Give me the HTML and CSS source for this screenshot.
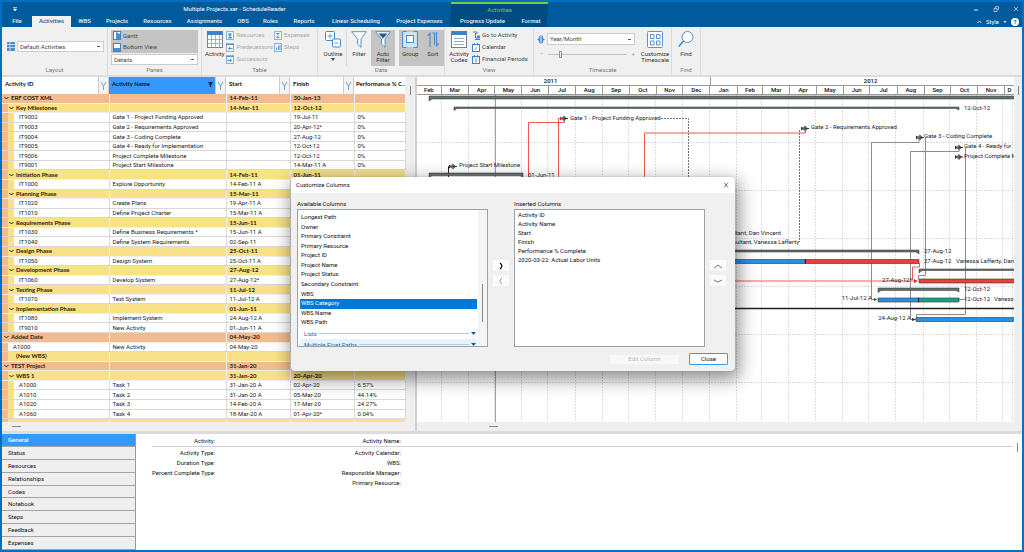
FILE: index.html
```html
<!DOCTYPE html>
<html lang="en">
<head>
<meta charset="utf-8">
<title>Multiple Projects.xer - ScheduleReader</title>
<link rel="stylesheet" href="styles.css">
</head>
<body>
<div class="window">
  <header class="titlebar">
    <div class="title-row">
      <button class="quick" aria-label="Customize toolbar"><svg width="6" height="6"><path d="M1 1.5h4M1.5 3l1.5 2L4.500 3z" stroke="#fff" stroke-width=".6" fill="#fff"/></svg></button>
      <h1 class="title">Multiple Projects.xer - ScheduleReader</h1>
      <div class="context">Activities</div>
      <div class="win-buttons">
        <button aria-label="Minimize"><svg width="6" height="6"><path d="M1 4h4" stroke="#dfe9f2"/></svg></button>
        <button aria-label="Restore"><svg width="6" height="6"><path d="M1 2.500h3v3H1zM2.500 2V.7H5.500v2.800H4.500" stroke="#dfe9f2" stroke-width=".7" fill="none"/></svg></button>
        <button aria-label="Close window"><svg width="6" height="6"><path d="M1 1l4 4M5 1L1 5" stroke="#dfe9f2" stroke-width=".7"/></svg></button>
      </div>
    </div>
    <div class="tab-row">
      <nav class="tabs">
        <a href="#">File</a><a href="#" class="active">Activities</a><a href="#">WBS</a><a href="#">Projects</a><a href="#">Resources</a><a href="#">Assignments</a><a href="#">OBS</a><a href="#">Roles</a><a href="#">Reports</a><a href="#">Linear Scheduling</a><a href="#">Project Expenses</a><a href="#" class="ctx">Progress Update</a><a href="#" class="ctx">Format</a>
      </nav>
      <div class="style-menu">
        <svg width="5" height="4"><path d="M.7 3L2.500 1l1.800 2" stroke="#fff" stroke-width=".8" fill="none"/></svg>
        <button>Style</button>
        <svg width="4" height="4"><path d="M.5 1h3L2 3z" fill="#fff"/></svg>
        <button class="help" aria-label="Help">?</button>
      </div>
    </div>
  </header>

  <section class="ribbon">
    <div class="group g-layout">
      <div class="tools">
        <svg class="i8" viewBox="0 0 8 9"><rect width="8" height="9" fill="#4a90d0"/><path d="M0 2.500h8M0 5.500h8M3 0v9" stroke="#cfe2f5" stroke-width=".8"/></svg>
        <select aria-label="Layout"><option>Default Activities</option></select>
      </div>
      <h2>Layout</h2>
    </div>
    <div class="group g-panes">
      <div class="tools">
        <div class="pressed">
          <button class="row"><svg class="i8" viewBox="0 0 8 9"><rect x=".5" y=".5" width="7" height="8" fill="#fff" stroke="#3c84c6"/><path d="M3 1v7h4V3z" fill="#4a90d0"/></svg>Gantt</button>
          <button class="row"><svg class="i8" viewBox="0 0 8 9"><rect x=".5" y=".5" width="7" height="8" fill="#fff" stroke="#3c84c6"/><path d="M1 5h6v3H1z" fill="#4a90d0"/></svg>Bottom View</button>
        </div>
        <select aria-label="Bottom pane"><option>Details</option></select>
      </div>
      <h2>Panes</h2>
    </div>
    <div class="group g-table">
      <div class="tools">
        <button class="big"><svg class="i16" viewBox="0 0 16 17"><rect x=".5" y=".5" width="15" height="16" fill="#fff" stroke="#77818a"/><path d="M0 0h16v4H0z" fill="#3c84c6"/><path d="M4.500 4v13M8.500 4v13M12.500 4v13M0 8.500h16M0 12.500h16" stroke="#8a939b" stroke-width=".7"/></svg>Activity</button>
        <div class="stack dim">
          <button class="row"><svg class="i8" viewBox="0 0 8 9"><rect x=".5" y=".5" width="7" height="8" fill="#eef5fb" stroke="#8ab4dc"/><circle cx="4" cy="3.500" r="1.500" fill="#5b97cf"/><path d="M2 7.500c0-3 4-3 4 0z" fill="#5b97cf"/></svg>Resources</button>
          <button class="row"><svg class="i8" viewBox="0 0 8 9"><rect x=".5" y=".5" width="7" height="8" fill="#eef5fb" stroke="#8ab4dc"/><path d="M0 1.500h8M6.500 5.500h-4M4 4L2.500 5.500 4 7" stroke="#5b97cf" fill="none"/></svg>Predecessors</button>
          <button class="row"><svg class="i8" viewBox="0 0 8 9"><rect x=".5" y=".5" width="7" height="8" fill="#eef5fb" stroke="#8ab4dc"/><path d="M0 1.500h8M1.500 5.500h4M4 4l1.500 1.500L4 7" stroke="#5b97cf" fill="none"/></svg>Successors</button>
        </div>
        <div class="stack dim">
          <button class="row"><svg class="i8" viewBox="0 0 8 9"><rect x=".5" y=".5" width="7" height="8" fill="#eef5fb" stroke="#8ab4dc"/><path d="M5.500 2.500h-3l2 2-2 2h3" stroke="#5b97cf" fill="none"/></svg>Expenses</button>
          <button class="row"><svg class="i8" viewBox="0 0 8 9"><rect x=".5" y=".5" width="7" height="8" fill="#eef5fb" stroke="#8ab4dc"/><path d="M2.500 7V4.500M4.500 7V3M6 7V2" stroke="#5b97cf"/></svg>Steps</button>
        </div>
      </div>
      <h2>Table</h2>
    </div>
    <div class="group g-data">
      <div class="tools">
        <button class="big outline"><svg class="i16" viewBox="0 0 16 17"><rect x=".5" y=".5" width="9" height="9" rx="1" fill="#fff" stroke="#4a88c4"/><path d="M5 2.500v5M2.500 5h5" stroke="#4a88c4" stroke-width=".8"/><rect x="7.500" y="8" width="8" height="8" rx="1" fill="#fff" stroke="#4a88c4"/><path d="M9.500 12h4" stroke="#4a88c4" stroke-width=".8"/></svg>Outline<svg class="caret" viewBox="0 0 4 3"><path d="M0 0h4L2 3z" fill="#444"/></svg></button>
        <button class="big"><svg class="i16" viewBox="0 0 16 17"><path d="M.7 .7h14.600L10 8v8.300L6.500 13V8z" fill="#fff" stroke="#4a88c4" stroke-width=".9"/></svg>Filter</button>
        <button class="big on"><svg class="i16" viewBox="0 0 16 17"><path d="M.7 .7h14.600L10 8v8.300L6.500 13V8z" fill="#fff" stroke="#4a88c4" stroke-width=".9"/><path d="M3.500 2.500h9L8.200 7.500z" fill="#1c5c9c"/></svg>Auto<br>Filter</button>
        <div class="pair">
          <button class="big"><svg class="i16" viewBox="0 0 16 17"><path d="M1 1h14v15H1z" fill="#d5e4f3"/><path d="M4.500 .6H.6v15.800h3.900M11.500 .6h3.900v15.800h-3.900" fill="none" stroke="#4a88c4"/><rect x="4.500" y="4.500" width="7" height="7" fill="#fff" stroke="#4a88c4"/></svg>Group</button>
          <button class="big"><svg class="i16" viewBox="0 0 16 17"><path d="M5 16V2.500M2.500 5L5 2.200V12M7.500 2h2v12M11.500 1v13.500M14 12l-2.500 3V2" fill="none" stroke="#4a88c4" stroke-width="1.100"/></svg>Sort</button>
        </div>
      </div>
      <h2>Data</h2>
    </div>
    <div class="group g-view">
      <div class="tools">
        <button class="big"><svg class="i16" viewBox="0 0 16 17"><rect x=".5" y=".5" width="15" height="16" fill="#fff" stroke="#77818a"/><path d="M0 0h16v4H0z" fill="#3c84c6"/><path d="M3 7.500h10M3 10.500h10M3 13.500h10" stroke="#8a939b" stroke-width=".8"/></svg>Activity<br>Codes</button>
        <div class="stack">
          <button class="row"><svg class="i8" viewBox="0 0 8 9"><path d="M1 1h4v2M3.500 2v5h3M3 8.500h5" stroke="#3c84c6" fill="none"/><path d="M5 4.500h3v3H5z" fill="#4a90d0"/></svg>Go to Activity</button>
          <button class="row"><svg class="i8" viewBox="0 0 8 9"><rect x=".5" y="1.500" width="7" height="7" fill="#fff" stroke="#3c84c6"/><path d="M2.500 0v2.500M5.500 0v2.500M5 4L3 7" stroke="#3c84c6" stroke-width=".8"/></svg>Calendar</button>
          <button class="row"><svg class="i8" viewBox="0 0 8 9"><rect x=".5" y="1.500" width="7" height="7" fill="#fff" stroke="#3c84c6"/><path d="M2.500 0v2.500M5.500 0v2.500M4 3.500v4" stroke="#3c84c6"/></svg>Financial Periods</button>
        </div>
      </div>
      <h2>View</h2>
    </div>
    <div class="group g-time">
      <div class="tools">
        <div class="scale">
          <div class="scale-top">
            <svg class="i8" viewBox="0 0 8 9"><path d="M2.500 1v7M4 0v9M5.500 1v7" stroke="#4a90d0"/><path d="M0 4.500L3 2.500v4zM8 4.500L5 2.500v4z" fill="#4a90d0"/></svg>
            <select aria-label="Timescale"><option>Year/Month</option></select>
          </div>
          <div class="zoom"><button aria-label="Zoom out">−</button><input type="range" aria-label="Zoom" min="0" max="100" value="14"><button aria-label="Zoom in">+</button></div>
        </div>
        <button class="big"><svg class="i16" viewBox="0 0 16 17"><rect x=".5" y=".5" width="15" height="16" rx="1" fill="#fff" stroke="#5e94c8"/><path d="M3.500 3.500h3.500v4H3.500zM9.500 3.500H13v4H9.500zM3.500 10h3.500v4H3.500zM9.500 10H13v4H9.500z" fill="#fff" stroke="#4a88c4" stroke-width=".9"/></svg>Customize<br>Timescale</button>
      </div>
      <h2>Timescale</h2>
    </div>
    <div class="group g-find">
      <div class="tools">
        <button class="big"><svg class="i16" viewBox="0 0 16 17"><circle cx="9.500" cy="6" r="5.500" fill="#fff" stroke="#3c84c6" stroke-width=".9"/><path d="M5.500 10L.8 15.500" stroke="#3c84c6" stroke-width="1.400"/></svg>Find</button>
      </div>
      <h2>Find</h2>
    </div>
  </section>

  <main class="work">
    <div class="pane">
      <div class="grid-box">
        <table class="grid">
          <colgroup><col class="c-id"><col class="c-name"><col class="c-date"><col class="c-date"><col class="c-perf"></colgroup>
          <thead><tr><th>Activity ID</th><th class="sel"><span class="th-flex">Activity Name<svg width="5" height="5"><path d="M0 0h5L3.200 3v2H1.800V3z" fill="#12263c"/></svg></span></th><th>Start</th><th>Finish</th><th class="last">Performance % C...</th></tr></thead>
          <tbody id="rows"></tbody>
        </table>
        <div class="vbar"><i></i></div>
      </div>
      <div class="hbar"><i></i></div>
    </div>
    <div class="gantt">
      <div class="gantt-box">
        <div class="chart">
          <div class="years"><span class="y1">2011</span><span class="y2">2012</span></div>
          <div class="months" id="months"></div>
          <svg class="plot" role="img" aria-label="Gantt chart">
            <g transform="translate(-417 -94)">
              <g id="lines" stroke="#dedede" stroke-dasharray="2 1"></g>
              <path d="M495.500 94v330" stroke="#6aaef0"/>
              <g fill="none" stroke="#8b8b8b">
                <path d="M871.500 298V141.500H919V138M871.500 298.500h5"/>
                <path d="M910.500 318V150.500H959V148M910.500 318.500h5"/>
                <path d="M925.500 137V274.500h-7v4M965.500 147V313.500h-49v3M959 298.500h6"/>
                <path d="M448.500 177V165.500h4" stroke="#222"/>
                <path d="M661 117.500h27.500V177M799.500 129V241" stroke="#777" stroke-dasharray="2 1"/>
              </g>
              <g fill="none" stroke="#ee5a55">
                <path d="M528.500 177V121.500H564.500V119M558.500 177V117.500h4M644.500 177V132H805.500V129M734 280h181M919.500 262v4h-7v13"/>
              </g>
              <g fill="#65706f" stroke="#333" stroke-width=".5">
                <path d="M429 95h590v3H432l-3 2z"/>
                <path d="M454 106h505v3l-3-1.500H457l-3 2z"/>
                <path d="M429 172h94v4l-3-1.500H432l-3 2z"/>
                <path d="M734 249h185v4l-3-2H734z"/>
                <path d="M919 268h100v1.500H922l-3 2.500z"/>
                <path d="M878 287h81v4l-3-1.500H881l-3 2z"/>
              </g>
              <path d="M734 307.500h290" stroke="#222" stroke-width="1.500"/>
              <g stroke="#333" stroke-width=".6">
                <path d="M730 258.500h75v4h-75zM878 297h40.500v4H878zM916 316.500h110v4H916z" fill="#2d8fe0"/>
                <path d="M805.500 258.500H919v4H805.500zM919 278h110v4H919z" fill="#ea4136"/>
                <path d="M918.500 297H959v4h-40.500z" fill="#12a58a"/>
                <path d="M805.500 258v5M918.500 296.500v5" stroke="#000"/>
              </g>
              <g fill="#333" id="stones"></g>
              <g class="labels">
                <text x="570" y="119">Gate 1 - Project Funding Approved</text>
                <text x="811" y="128">Gate 2 - Requirements Approved</text>
                <text x="924" y="137">Gate 3 - Coding Complete</text>
                <text x="964" y="147">Gate 4 - Ready for</text>
                <text x="964" y="157">Project Complete M</text>
                <text x="964" y="109">12-Oct-12</text>
                <text x="459" y="166">Project Start Milestone</text>
                <text x="528" y="176">01-Jun-11</text>
                <text x="781" y="234" class="end">Consultant, Dan Vincent</text>
                <text x="799" y="243" class="end">Consultant, Vanessa Lafferty</text>
                <text x="924" y="252">27-Aug-12</text>
                <text x="924" y="262">27-Aug-12</text><text x="956" y="262">Vanessa Lafferty, Dan</text>
                <text x="912" y="281" class="end">27-Aug-12*</text>
                <text x="964" y="290">12-Oct-12</text>
                <text x="964" y="300">12-Oct-12</text><text x="994" y="300">Vaness</text>
                <text x="872" y="299" class="end">11-Jul-12 A</text>
                <text x="911" y="319" class="end">24-Aug-12 A</text>
              </g>
            </g>
          </svg>
        </div>
        <div class="vbar"><i></i></div>
      </div>
      <div class="hbar"><i></i></div>
    </div>
  </main>

  <section class="details">
    <nav class="side">
      <button class="active">General</button><button>Status</button><button>Resources</button><button>Relationships</button><button>Codes</button><button>Notebook</button><button>Steps</button><button>Feedback</button><button>Expenses</button>
    </nav>
    <div class="info">
      <dl class="top"><dt>Activity:</dt><dt>Activity Name:</dt></dl>
      <dl><dt>Activity Type:</dt><dt>Activity Calendar:</dt><dt>Duration Type:</dt><dt>WBS:</dt><dt>Percent Complete Type:</dt><dt>Responsible Manager:</dt><dt></dt><dt>Primary Resource:</dt></dl>
    </div>
    <div class="vbar"><i></i></div>
  </section>
</div>

<div class="dialog" role="dialog" aria-labelledby="dlg-title">
  <div class="dlg-head"><h2 id="dlg-title">Customize Columns</h2><button aria-label="Close dialog"><svg width="6" height="6"><path d="M1 .5l4 5M5 .5l-4 5" stroke="#555" stroke-width=".8"/></svg></button></div>
  <div class="dlg-body">
    <div class="field">
      <h3 id="av">Available Columns</h3>
      <div class="list">
        <div class="scroll">
          <ul class="avail" role="listbox" aria-labelledby="av"><li>Longest Path</li><li>Owner</li><li>Primary Constraint</li><li>Primary Resource</li><li>Project ID</li><li>Project Name</li><li>Project Status</li><li>Secondary Constraint</li><li>WBS</li><li class="sel">WBS Category</li><li>WBS Name</li><li>WBS Path</li></ul>
          <button class="fold">Lists<span></span><svg viewBox="0 0 5 3"><path d="M0 0h5L2.500 3z" fill="#1c5c9c"/></svg></button>
          <button class="fold hover">Multiple Float Paths<span></span><svg viewBox="0 0 5 3"><path d="M0 0h5L2.500 3z" fill="#1c5c9c"/></svg></button>
        </div>
        <div class="track"><i></i></div>
      </div>
    </div>
    <div class="arrows">
      <button aria-label="Add"><svg viewBox="0 0 8 8"><path d="M3 1c2.500 2 2.500 4 0 6" stroke="#111" stroke-width="1.300" fill="none"/></svg></button>
      <button aria-label="Remove"><svg viewBox="0 0 8 8"><path d="M5 1c-2.500 2-2.500 4 0 6" stroke="#888" fill="none"/></svg></button>
    </div>
    <div class="field">
      <h3 id="ins">Inserted Columns</h3>
      <div class="list">
        <ul class="inserted" role="listbox" aria-labelledby="ins"><li>Activity ID</li><li>Activity Name</li><li>Start</li><li>Finish</li><li>Performance % Complete</li><li>2020-03-22: Actual Labor Units</li></ul>
      </div>
    </div>
    <div class="arrows">
      <button aria-label="Move up"><svg viewBox="0 0 8 8"><path d="M0 6l4-3 4 3" stroke="#777" fill="none"/></svg></button>
      <button aria-label="Move down"><svg viewBox="0 0 8 8"><path d="M0 3l4 2 4-2" stroke="#777" fill="none"/></svg></button>
    </div>
  </div>
  <div class="dlg-foot"><button class="edit" disabled>Edit Column</button><button class="close">Close</button></div>
</div>
<script src="app.js"></script>
</body>
</html>
```
FILE: app.js
```js
// kind: o = project band, y = WBS band, n = band without arrow, r = activity, p = activity at project level
const rows = [
  ['o', 'ERF COST XML', '', '14-Feb-11', '30-Jan-13', ''],
  ['y', 'Key Milestones', '', '14-Mar-11', '12-Oct-12', ''],
  ['r', 'IT9002', 'Gate 1 - Project Funding Approved', '', '19-Jul-11', '0%'],
  ['r', 'IT9003', 'Gate 2 - Requirements Approved', '', '20-Apr-12*', '0%'],
  ['r', 'IT9004', 'Gate 3 - Coding Complete', '', '27-Aug-12', '0%'],
  ['r', 'IT9005', 'Gate 4 - Ready for Implementation', '', '12-Oct-12', '0%'],
  ['r', 'IT9006', 'Project Complete Milestone', '', '12-Oct-12', '0%'],
  ['r', 'IT9001', 'Project Start Milestone', '', '14-Mar-11 A', '0%'],
  ['y', 'Initiation Phase', '', '14-Feb-11', '01-Jun-11', ''],
  ['r', 'IT1000', 'Explore Opportunity', '14-Feb-11 A', '', ''],
  ['y', 'Planning Phase', '', '15-Mar-11', '', ''],
  ['r', 'IT1020', 'Create Plans', '19-Apr-11 A', '', ''],
  ['r', 'IT1010', 'Define Project Charter', '15-Mar-11 A', '', ''],
  ['y', 'Requirements Phase', '', '15-Jun-11', '', ''],
  ['r', 'IT1030', 'Define Business Requirements *', '15-Jun-11 A', '', ''],
  ['r', 'IT1040', 'Define System Requirements', '02-Sep-11', '', ''],
  ['y', 'Design Phase', '', '25-Oct-11', '', ''],
  ['r', 'IT1050', 'Design System', '25-Oct-11 A', '', ''],
  ['y', 'Development Phase', '', '27-Aug-12', '', ''],
  ['r', 'IT1060', 'Develop System', '27-Aug-12*', '', ''],
  ['y', 'Testing Phase', '', '11-Jul-12', '', ''],
  ['r', 'IT1070', 'Test System', '11-Jul-12 A', '', ''],
  ['y', 'Implementation Phase', '', '01-Jun-11', '', ''],
  ['r', 'IT1080', 'Implement System', '24-Aug-12 A', '', ''],
  ['r', 'IT9010', 'New Activity', '01-Jun-11 A', '', ''],
  ['o', 'Added Date', '', '04-May-20', '', ''],
  ['p', 'A1000', 'New Activity', '04-May-20', '', ''],
  ['n', '(New WBS)', '', '', '', ''],
  ['o', 'TEST Project', '', '31-Jan-20', '', ''],
  ['y', 'WBS 1', '', '31-Jan-20', '20-Apr-20', ''],
  ['r', 'A1000', 'Task 1', '31-Jan-20 A', '02-Apr-20', '6.57%'],
  ['r', 'A1010', 'Task 2', '31-Jan-20 A', '05-Mar-20', '44.14%'],
  ['r', 'A1020', 'Task 3', '14-Feb-20 A', '17-Mar-20', '24.27%'],
  ['r', 'A1060', 'Task 4', '18-Mar-20 A', '01-Apr-20*', '0.04%'],
  ['y', 'WBS 1.2', '', '31-Jan-20', '31-Jan-20', '']
];
const arrow = '<svg class="tw" viewBox="0 0 5 4"><path d="M.5 1l2 2 2-2" fill="none" stroke="#222"/></svg>';
document.getElementById('rows').innerHTML = rows.map(([k, ...c]) =>
  `<tr class="${k}">` + c.map((t, i) =>
    `<td>${i === 0 && (k === 'o' || k === 'y') ? arrow : ''}${t}</td>`).join('') + '</tr>').join('');

const months = [['Feb', 28], ['Mar', 31], ['Apr', 30], ['May', 31], ['Jun', 30], ['Jul', 31], ['Aug', 31], ['Sep', 30], ['Oct', 31], ['Nov', 30], ['Dec', 31],
  ['Jan', 31], ['Feb', 29], ['Mar', 31], ['Apr', 30], ['May', 31], ['Jun', 30], ['Jul', 31], ['Aug', 31], ['Sep', 30], ['Oct', 31], ['Nov', 30], ['D', 11]];
document.getElementById('months').innerHTML = months.map(([m, d]) => `<span style="flex-grow:${d}">${m}</span>`).join('');

let x = 417, d = '';
months.forEach(([, n]) => { x += n * 596 / 680; d += `M${Math.round(x) - 0.5} 94v330`; });
for (let y = 141.5; y < 420; y += 48) d += `M417 ${y}h620`;
document.getElementById('lines').innerHTML = `<path d="${d}"/>`;

document.getElementById('stones').innerHTML =
  [[564, 117.5, 1], [805, 127.5], [920, 136.5], [959, 146.5], [959, 156], [453, 165.5]].map(([cx, cy, hot]) =>
    `<path d="M${cx - 4} ${cy - 2}l3 2-3 2z" fill="${hot ? '#e22' : '#333'}"/><path d="M${cx} ${cy - 3}l3 3-3 3-3-3z" fill="#667"/><path d="M${cx} ${cy}h4" stroke="#333"/>`).join('') +
  '<path d="M874 297l3 1.500-3 1.500zM912 317l4 1.500-4 1.500z"/><path d="M914 278l4 2-4 2z" fill="#e22"/>';
```
FILE: styles.css
```css
* { box-sizing: border-box; }
body { margin: 0; height: 100vh; overflow: hidden; font: 6px/8px Roboto, "Noto Sans", sans-serif; color: #111; background: #0070c4; }
button, select, input { font: inherit; color: inherit; margin: 0; padding: 0; border: 0; background: none; }
h1, h2, h3, ul, dl { margin: 0; padding: 0; font: inherit; list-style: none; }
a { color: inherit; text-decoration: none; }
svg { flex: none; }
select { appearance: none; min-width: 0; border-radius: 0; background: #fff linear-gradient(#555, #555) no-repeat right 3px center / 3px 1px; border: 1px solid #ccc; padding: 0 2px; }

.window { display: flex; flex-direction: column; height: 100%; padding: 2px; }

/* title bar and tabs */
.titlebar { background: #005a9c; color: #fff; }
.title-row { display: flex; height: 14px; }
.title-row > * { display: flex; align-items: center; }
.quick { width: 16px; justify-content: flex-end; }
.title { width: 433px; justify-content: center; }
.context { width: 97px; justify-content: center; background: #004b82; border-top: 2px solid #7ac943; color: #86c553; }
.win-buttons { margin-left: auto; gap: 14px; padding-right: 3px; }
.win-buttons button { display: flex; }
.tab-row { display: flex; height: 11px; justify-content: space-between; }
.tabs { display: grid; grid-template-columns: 30px 39px 27px 38px 43px 51px 26px 29px 38px 66px 61px 65px 32px; font-weight: 500; }
.tabs a { text-align: center; line-height: 10px; color: #e4eef7; }
.tabs .active { background: #f0f0f0; color: #1463a5; }
.tabs .ctx { background: #004b82; }
.style-menu { display: flex; align-items: center; gap: 4px; padding-right: 3px; }
.help { width: 8px; height: 8px; border-radius: 50%; background: #fff; color: #005a9c; font-weight: 700; line-height: 8px; }

/* ribbon */
.ribbon { display: flex; height: 50px; background: #f0f0f0; color: #444; border-bottom: 2px solid #dcdcdc; }
.group { display: flex; flex-direction: column; border-right: 1px solid #dadada; padding-top: 3px; }
.group h2 { text-align: center; color: #777; }
.tools { display: flex; height: 36px; padding: 0 3px; }
.g-layout { width: 106px; }
.g-layout .tools { align-items: center; gap: 2px; padding: 0 3px 3px 5px; }
.g-layout select { flex: 1; height: 11px; }
.g-panes { width: 94px; }
.g-panes .tools { flex-direction: column; gap: 1px; }
.g-panes select { height: 11px; }
.pressed { display: flex; flex-direction: column; gap: 2px; background: #c4c4c4; height: 23px; padding: 1px 2px; }
.g-table { width: 116px; }
.g-data { width: 127px; }
.g-view { width: 89px; }
.g-time { width: 138px; }
.g-find { width: 29px; }
.i8 { width: 8px; height: 9px; }
.i16 { width: 16px; height: 17px; margin-bottom: 3px; }
.row { display: flex; align-items: center; gap: 2px; height: 10px; white-space: nowrap; }
.big { display: flex; flex-direction: column; align-items: center; width: 24px; padding-top: 1px; line-height: 6px; color: #333; }
.caret { width: 4px; height: 3px; margin-top: 1px; }
.stack { display: flex; flex-direction: column; gap: 2px; width: 48px; }
.dim { color: #a8a8a8; }
.g-table .tools { gap: 1px; padding: 0 0 0 2px; }
.g-data .tools { padding: 0 0 0 2px; }
.outline { width: 27px; border-right: 1px solid #dadada; }
.g-data .on { background: #c4c4c4; margin-left: 0; }
.pair { display: flex; background: #c4c4c4; margin-left: 4px; width: 45px; }
.g-view .tools { gap: 1px; padding: 0 2px; }
.g-time .tools { gap: 8px; }
.scale { display: flex; flex-direction: column; gap: 5px; width: 98px; padding-top: 3px; }
.scale-top { display: flex; align-items: center; gap: 2px; }
.scale-top select { flex: 1; height: 12px; }
.zoom { display: flex; align-items: center; gap: 5px; padding-left: 3px; color: #999; }
.zoom input { appearance: none; flex: 1; min-width: 0; height: 8px; background: linear-gradient(#c4c4c4, #c4c4c4) no-repeat center / 100% 1px; }
.zoom input::-webkit-slider-thumb { appearance: none; width: 3px; height: 7px; background: #f0f0f0; border: 1px solid #999; }
.g-find .tools { padding: 0 2px; }

/* work area */
.work { display: flex; height: 357px; background: #efefef; border-bottom: 3px solid #dcdcdc; }
.pane { display: flex; flex-direction: column; width: 413px; }
.grid-box, .gantt-box { display: flex; flex: 1; min-height: 0; overflow: hidden; }
.grid { table-layout: fixed; width: 403px; height: 352px; border-collapse: collapse; flex: none; }
.c-id { width: 107px; }
.c-name { width: 117px; }
.c-date { width: 64px; }
.c-perf { width: 51px; }
th, td { padding: 0 0 0 3px; white-space: nowrap; overflow: hidden; line-height: 8px; text-align: left; }
th { height: 17px; background: #fff url("data:image/svg+xml,%3Csvg xmlns='http://www.w3.org/2000/svg' width='11' height='17'%3E%3Cpath d='M0 0h11v17H0z' fill='%23f4f4f4'/%3E%3Cpath d='M.5 0v17M10.500 0v17' stroke='%23ccc'/%3E%3Cpath d='M3 5l2.500 4v4M8 5L5.500 9' fill='none' stroke='%236aa5dc'/%3E%3C/svg%3E") no-repeat right; font-family: Lato, sans-serif; font-weight: 700; vertical-align: middle; padding-bottom: 3px; }
th.last { background: #fff; padding-left: 2px; }
th.sel { background-color: #3399ff; }
.th-flex { display: flex; justify-content: space-between; align-items: center; padding-right: 13px; }
td { background: #fff; border-right: 1px dotted #ccc; border-bottom: 1px solid #d8d8d8; color: #222; }
td:first-child { padding-left: 17px; background: linear-gradient(90deg, #f3bb90 6px, #f8e187 6px 12px, #fff 12px); }
.p td:first-child { padding-left: 11px; background: linear-gradient(90deg, #f3bb90 6px, #fff 6px); }
.o td { background: #f3bb90; }
.y td, .n td { background: #f8e187; }
.o td, .y td, .n td { font-family: Lato, sans-serif; font-weight: 700; border-color: transparent; color: #2b200a; }
.o td:first-child { padding-left: 2px; background: #f3bb90; }
.y td:first-child { padding-left: 7px; background: linear-gradient(90deg, #f3bb90 6px, #f8e187 6px); }
.n td:first-child { padding-left: 14px; background: linear-gradient(90deg, #f3bb90 6px, #f8e187 6px); }
.tw { width: 5px; height: 4px; margin-right: 2px; }
.vbar { width: 10px; display: flex; justify-content: center; padding-top: 9px; }
.vbar i { width: 1px; height: 9px; background: #888; }
.hbar { height: 9px; padding: 4px 10px; }
.hbar i { display: block; width: 9px; height: 1px; background: #888; }

.gantt { display: flex; flex-direction: column; flex: 1; min-width: 0; border-left: 2px solid #d0d0d0; }
.gantt .hbar { padding-left: 72px; }
.gantt .vbar { width: 8px; }
.chart { display: flex; flex-direction: column; flex: 1; min-width: 0; background: #fff; overflow: hidden; }
.years, .months { font-weight: 500; text-align: center; border-bottom: 1px solid #999; height: 9px; }
.years { display: grid; grid-template-columns: 334fr 346fr; }
.months { display: flex; }
.years span + span, .months span + span { border-left: 1px solid #999; }
.y1 { padding-right: 26px; }
.y2 { padding-left: 16px; }
.months span { flex: 1 0 0; min-width: 0; overflow: hidden; }
.plot { flex: 1; width: 100%; min-height: 0; }
.labels { fill: #222; }
.end { text-anchor: end; }

/* details */
.details { display: flex; flex: 1; min-height: 0; background: #fff; }
.side { display: flex; flex-direction: column; width: 134px; border-right: 1px solid #999; }
.side button { flex: 1; text-align: left; padding-left: 6px; background: #efefef; border-bottom: 1px solid #a4a4a4; }
.side .active { background: #3399ff; color: #fff; font-weight: 500; }
.info { flex: 1; padding-left: 16px; }
.info dl { display: grid; grid-template-columns: 63px 186px; grid-auto-rows: 10px; padding-top: 1px; text-align: right; }
.info .top { height: 13px; padding-top: 2px; border-bottom: 1px solid #d0d0d0; }
.info dt { line-height: 10px; white-space: nowrap; }

/* dialog */
.dialog { position: absolute; left: 291px; top: 177px; width: 444px; display: flex; flex-direction: column; background: #f0f0f0; border-radius: 4px; box-shadow: 0 0 1px #777, 2px 6px 18px 2px rgba(0, 0, 0, .45); overflow: hidden; }
.dlg-head { display: flex; justify-content: space-between; align-items: center; height: 16px; padding: 0 6px 0 5px; background: #fff; }
.dlg-head button { display: flex; }
.dlg-head h2 { font-size: 6px; }
.dlg-body { display: grid; grid-template-columns: 191px 16px 191px 16px; column-gap: 5px; padding: 7px 6px 0; }
.dlg-body h3 { height: 9px; }
.list { display: flex; height: 138px; background: #fff; border: 1px solid #9aa3ac; overflow: hidden; }
.scroll { flex: 1; padding: 3px 1px 0 2px; }
.avail { display: grid; grid-auto-rows: 1fr; height: 115px; }
.avail li, .inserted li { padding-left: 1px; }
.avail .sel { background: #0078d7; color: #fff; }
.fold { display: flex; align-items: center; gap: 2px; width: 100%; height: 11px; padding: 0 1px 0 4px; color: #2a62a8; }
.fold.hover { background: #e5f3fb; }
.fold span { flex: 1; height: 1px; background: #b9cbe0; }
.fold svg { width: 5px; height: 3px; }
.track { width: 9px; background: #f4f4f4; padding: 74px 4px 0; }
.track i { display: block; width: 1px; height: 38px; background: #888; }
.inserted { padding: 0 0 0 2px; line-height: 9px; }
.arrows { display: flex; flex-direction: column; gap: 4px; padding-top: 60px; }
.arrows button { display: flex; align-items: center; justify-content: center; height: 11px; background: #fbfbfb; }
.arrows svg { width: 8px; height: 8px; }
.dlg-foot { display: flex; justify-content: flex-end; align-items: center; gap: 10px; padding: 6px 7px 6px; }
.edit { width: 69px; height: 9px; background: #f8f8f8; color: #bbb; }
.close { width: 39px; height: 12px; background: #fff; border: 1px solid #3c9ae8; border-radius: 1px; line-height: 8px; }
```
